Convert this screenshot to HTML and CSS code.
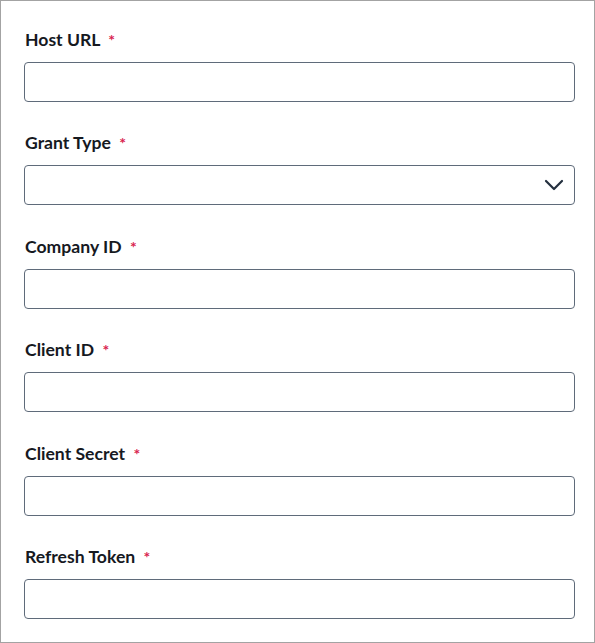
FILE: index.html
```html
<!DOCTYPE html>
<html lang="en">
<head>
<meta charset="utf-8">
<title>Connection settings</title>
<link rel="stylesheet" href="styles.css">
</head>
<body>
<form class="panel">
  <div class="field">
    <label class="label">Host URL <span class="req">*</span></label>
    <div class="input"></div>
  </div>
  <div class="field">
    <label class="label">Grant Type <span class="req">*</span></label>
    <div class="input select">
      <svg class="chev" width="20" height="12" viewBox="0 0 20 12"><path d="M2 2 L10 10 L18 2" fill="none" stroke="#232f3e" stroke-width="2.2" stroke-linecap="round" stroke-linejoin="round"/></svg>
    </div>
  </div>
  <div class="field">
    <label class="label">Company ID <span class="req">*</span></label>
    <div class="input"></div>
  </div>
  <div class="field">
    <label class="label">Client ID <span class="req">*</span></label>
    <div class="input"></div>
  </div>
  <div class="field">
    <label class="label">Client Secret <span class="req">*</span></label>
    <div class="input"></div>
  </div>
  <div class="field">
    <label class="label">Refresh Token <span class="req">*</span></label>
    <div class="input"></div>
  </div>
</form>
</body>
</html>
```
FILE: styles.css
```css
html, body {
  margin: 0;
  padding: 0;
  background: #ffffff;
}
.panel {
  box-sizing: border-box;
  width: 595px;
  height: 643px;
  border: 1px solid #a3a3a3;
  padding: 27px 19px 0 23px;
  display: flex;
  flex-direction: column;
  gap: 29.4px;
  font-family: Lato, "Liberation Sans", sans-serif;
}
.field {
  display: flex;
  flex-direction: column;
  gap: 10px;
}
.label {
  display: block;
  height: 24px;
  line-height: 24px;
  font-size: 17.6px;
  font-weight: 700;
  color: #16191f;
  padding-left: 1px;
}
.req {
  color: #d91f4f;
  font-size: 16px;
  margin-left: 4px;
}
.input {
  box-sizing: border-box;
  height: 40px;
  border: 1px solid #5f6b7a;
  border-radius: 4px;
  background: #fff;
}
.select {
  display: flex;
  align-items: center;
  justify-content: flex-end;
  padding-right: 10px;
}
.chev {
  display: block;
}
```
